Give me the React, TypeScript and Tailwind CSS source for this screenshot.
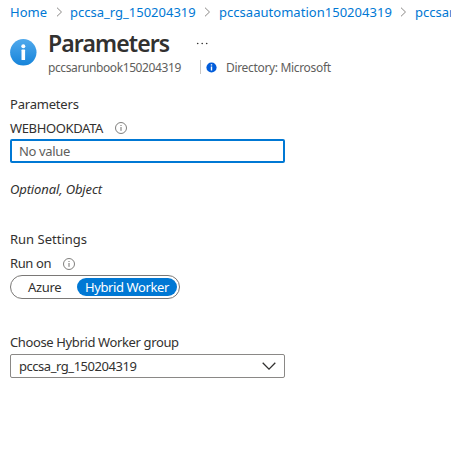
import React from 'react';

function Separator({ className }: { className: string }) {
  return (
    <svg className={`shrink-0 ${className}`} width="7" height="10" viewBox="0 0 7 10" fill="none" stroke="#8a8886" strokeWidth="1">
      <path d="M1 .7 5.5 5 1 9.3" />
    </svg>
  );
}

function HelpIcon() {
  return (
    <svg className="shrink-0" width="13" height="13" viewBox="0 0 13 13" fill="none" stroke="#605e5c">
      <circle cx="7" cy="7" r="5.5" strokeWidth=".8" />
      <path d="M7 6v3.8M7 4v1" strokeWidth=".9" />
    </svg>
  );
}

export default function App() {
  return (
    <main className="h-[462px] w-[451px] overflow-hidden bg-white font-['Noto_Sans','Open_Sans',sans-serif] text-[13px] leading-[18px] whitespace-nowrap text-[#323130]">
      <nav className="flex h-6 items-center pl-[10px] text-[13px] text-[#0078d4]">
        <a className="w-[38px] shrink-0">Home</a>
        <Separator className="mr-[7px] ml-2" />
        <a className="w-[127px] shrink-0">pccsa_rg_150204319</a>
        <Separator className="mr-[8px] ml-[7px]" />
        <a className="w-[174px] shrink-0 tracking-[0.03px]">pccsaautomation150204319</a>
        <Separator className="mr-[8px] ml-[7px]" />
        <a className="shrink-0">pccsar</a>
      </nav>

      <header className="flex h-[71px] pl-[10px]">
        <svg className="mt-[15px] shrink-0" width="27" height="27" viewBox="0 0 27 27">
          <defs>
            <linearGradient id="badge" x1="0" y1="0" x2="0" y2="1">
              <stop stopColor="#50a9ec" />
              <stop offset="1" stopColor="#1684da" />
            </linearGradient>
          </defs>
          <circle cx="13.3" cy="13.3" r="13.2" fill="url(#badge)" />
          <circle cx="13.3" cy="7.3" r="2" fill="#fff" />
          <rect x="11.5" y="10.6" width="3.6" height="10.4" rx=".6" fill="#fff" />
        </svg>
        <div className="ml-[11px]">
          <div className="flex h-[34px] items-center pt-1">
            <h1 className="w-[148px] text-[23px] leading-[30px] font-semibold tracking-[-0.9px]">Parameters</h1>
            <svg width="13" height="3" viewBox="0 0 13 3" fill="#323130">
              <circle cx="1.7" cy="1.5" r=".8" />
              <circle cx="6.2" cy="1.5" r=".8" />
              <circle cx="10.7" cy="1.5" r=".8" />
            </svg>
          </div>
          <div className="flex h-[20px] items-center text-[12px] text-[#605e5c]">
            <span className="w-[152px] tracking-[-0.4px]">pccsarunbook150204319</span>
            <span className="mb-[2px] h-[14px] w-px bg-[#c8c6c4]" />
            <svg className="mb-[2px] ml-[5px]" width="11" height="11" viewBox="0 0 11 11">
              <circle cx="5.5" cy="5.5" r="5.1" fill="#015cda" />
              <path d="M5.5 4.4v4.1M5.5 2.2v1.3" stroke="#fff" strokeWidth="1.4" />
            </svg>
            <span className="ml-[9px] tracking-[-0.33px]">Directory: Microsoft</span>
          </div>
        </div>
      </header>

      <section className="w-[285px] pl-[10px]">
        <h2 className="h-6 tracking-[-0.2px]">Parameters</h2>
        <label className="flex h-5 items-center pb-[3px]">
          <span className="w-[104px] tracking-[-0.36px]">WEBHOOKDATA</span>
          <HelpIcon />
        </label>
        <div className="flex h-6 w-[275px] items-center rounded-[2px] border-2 border-[#0078d4] pl-[7px] tracking-[-0.35px] text-[#605e5c]">No value</div>
        <p className="mt-[17px] tracking-[-0.12px] italic">Optional, Object</p>
      </section>

      <section className="mt-8 w-[285px] pl-[10px]">
        <h2 className="h-6">Run Settings</h2>
        <div className="flex h-[21px] items-center pb-[3px]">
          <span className="w-[52px] tracking-[-0.4px]">Run on</span>
          <HelpIcon />
        </div>
        <div className="flex h-6 w-[170px] items-center rounded-full border border-[#7a7876] p-[2px]">
          <span className="w-16 pl-[15px] tracking-[-0.35px]">Azure</span>
          <span className="h-[18px] w-[100px] rounded-full bg-[#0078d4] text-center tracking-[-0.4px] text-white">Hybrid Worker</span>
        </div>
        <h2 className="mt-[34px] h-[21px] tracking-[-0.37px]">Choose Hybrid Worker group</h2>
        <div className="flex h-6 w-[275px] items-center justify-between rounded-[2px] border border-[#8a8886] pr-2 pl-2">
          <span className="tracking-[-0.46px]">pccsa_rg_150204319</span>
          <svg width="14" height="8" viewBox="0 0 14 8" fill="none" stroke="#323130" strokeWidth="1.3">
            <path d="M.7.8 7 7.1 13.3.8" />
          </svg>
        </div>
      </section>
    </main>
  );
}
